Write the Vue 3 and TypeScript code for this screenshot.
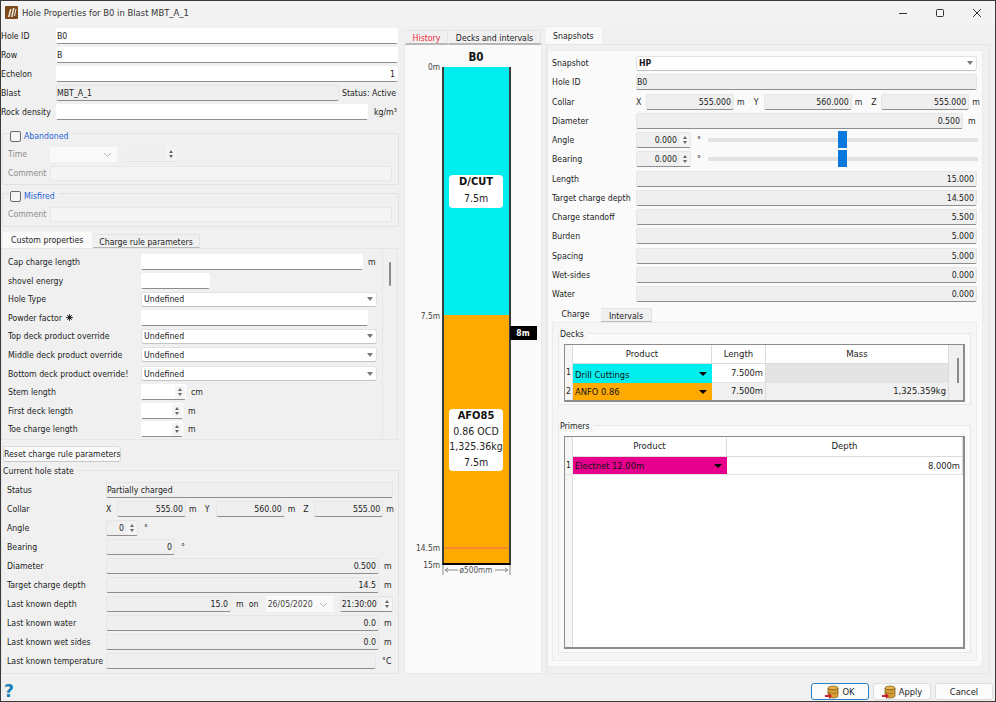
<template>
  <div class="window">
    <header class="titlebar">
      <svg class="app-icon" width="13" height="13" viewBox="0 0 13 13">
        <rect width="13" height="13" rx="1" fill="#7a4a1c" />
        <path d="M3 11 L5 3 L6.5 3 L4.5 11 Z M6 11 L8 2 L9.5 2 L7.5 11 Z M9 10 L10.5 3 L11.5 3 L10 10 Z" fill="#f4efe6" />
      </svg>
      <span class="title">Hole Properties for B0 in Blast MBT_A_1</span>
      <div class="win-btns">
        <svg width="10" height="10" viewBox="0 0 10 10"><path d="M1 5.5H9" stroke="#333" fill="none" /></svg>
        <svg width="10" height="10" viewBox="0 0 10 10"><rect x="1.5" y="1.5" width="7" height="7" rx="1" stroke="#333" fill="none" /></svg>
        <svg width="10" height="10" viewBox="0 0 10 10"><path d="M1 1L9 9M9 1L1 9" stroke="#333" fill="none" /></svg>
      </div>
    </header>

    <main class="content">
      <section class="left">
        <div class="top-rows">
          <div class="row"><label class="lbl-top">Hole ID</label><div class="field white grow">B0</div></div>
          <div class="row"><label class="lbl-top">Row</label><div class="field white grow">B</div></div>
          <div class="row"><label class="lbl-top">Echelon</label><div class="field white grow right">1</div></div>
          <div class="row">
            <label class="lbl-top">Blast</label><div class="field grow">MBT_A_1</div>
            <span class="status">Status: Active</span>
          </div>
          <div class="row">
            <label class="lbl-top">Rock density</label><div class="field white grow"></div>
            <span class="unit-density">kg/m³</span>
          </div>
        </div>

        <div class="group abandoned">
          <div class="group-title"><span class="check"></span><span class="blue">Abandoned</span></div>
          <div class="row disabled time-row">
            <label class="lbl-dis">Time</label>
            <div class="date-off"><svg width="9" height="5" viewBox="0 0 9 5"><path d="M1 1L4.5 4.5L8 1" stroke="#b5b5b5" fill="none" /></svg></div>
            <div class="time-off"><span class="spin-btns"><i class="up"></i><i class="down"></i></span></div>
          </div>
          <div class="row disabled comment"><label class="lbl-dis">Comment</label><div class="comment-box"></div></div>
        </div>

        <div class="group misfired">
          <div class="group-title"><span class="check"></span><span class="blue">Misfired</span></div>
          <div class="row disabled comment"><label class="lbl-dis">Comment</label><div class="comment-box"></div></div>
        </div>

        <div class="tabs custom-tabs">
          <span class="tab active">Custom properties</span>
          <span class="tab">Charge rule parameters</span>
        </div>
        <div class="custom-pane">
          <div class="custom-rows">
            <div v-for="r in customRows" :key="r.label" class="row">
              <label class="lbl-custom">{{ r.label }}
                <svg v-if="r.star" class="star" width="7" height="7" viewBox="0 0 7 7">
                  <path d="M3.5 0V7M0 3.5H7M1 1L6 6M6 1L1 6" stroke="#222" stroke-width=".8" />
                  <circle cx="3.5" cy="3.5" r="2" fill="#222" />
                </svg>
              </label>
              <div v-if="r.kind === 'combo'" class="combo">Undefined<i class="arrow"></i></div>
              <div v-else-if="r.kind === 'spin'" class="field white spin" :style="{ width: r.width + 'px' }">
                <span class="spin-btns"><i class="up"></i><i class="down"></i></span>
              </div>
              <div v-else class="field white" :style="{ width: r.width + 'px' }"></div>
              <span v-if="r.unit" class="unit">{{ r.unit }}</span>
            </div>
          </div>
          <div class="vscroll"><span class="vthumb"></span></div>
        </div>

        <button class="reset" type="button">Reset charge rule parameters</button>

        <div class="group state">
          <div class="group-title plain">Current hole state</div>
          <div class="state-rows">
            <div class="row"><label class="lbl-state">Status</label><div class="field grow">Partially charged</div></div>
            <div class="row collar">
              <label class="lbl-state">Collar</label>
              <span class="axis">X</span><div class="field right xyz">555.00</div><span class="unit">m</span>
              <span class="axis gap">Y</span><div class="field right xyz">560.00</div><span class="unit">m</span>
              <span class="axis gap">Z</span><div class="field right xyz">555.00</div><span class="unit">m</span>
            </div>
            <div class="row">
              <label class="lbl-state">Angle</label>
              <div class="field right spin angle-spin"><span>0</span><span class="spin-btns"><i class="up"></i><i class="down"></i></span></div>
              <span class="unit deg">°</span>
            </div>
            <div class="row">
              <label class="lbl-state">Bearing</label><div class="field right bearing">0</div><span class="unit deg">°</span>
            </div>
            <div class="row"><label class="lbl-state">Diameter</label><div class="field right grow">0.500</div><span class="unit m-end">m</span></div>
            <div class="row"><label class="lbl-state">Target charge depth</label><div class="field right grow">14.5</div><span class="unit m-end">m</span></div>
            <div class="row">
              <label class="lbl-state">Last known depth</label>
              <div class="field right depth-field">15.0</div>
              <span class="unit">m</span><span class="on">on</span>
              <div class="date-on">26/05/2020<svg width="9" height="5" viewBox="0 0 9 5"><path d="M1 1L4.5 4.5L8 1" stroke="#b5b5b5" fill="none" /></svg></div>
              <div class="field spin time-on"><span>21:30:00</span><span class="spin-btns"><i class="up"></i><i class="down"></i></span></div>
            </div>
            <div class="row"><label class="lbl-state">Last known water</label><div class="field right grow">0.0</div><span class="unit m-end">m</span></div>
            <div class="row"><label class="lbl-state">Last known wet sides</label><div class="field right grow">0.0</div><span class="unit m-end">m</span></div>
            <div class="row"><label class="lbl-state">Last known temperature</label><div class="field grow"></div><span class="unit c-end">°C</span></div>
          </div>
        </div>
      </section>

      <section class="mid">
        <div class="tabs mid-tabs">
          <span class="tab red">History</span>
          <span class="tab">Decks and intervals</span>
        </div>
        <div class="mid-pane">
          <svg class="hole" width="136" height="530" viewBox="405 45 136 530">
            <text x="476" y="61" class="hole-name" text-anchor="middle">B0</text>
            <rect x="443" y="67" width="67" height="248" fill="#00eeee" />
            <rect x="443" y="315" width="67" height="249" fill="#ffaa00" />
            <path d="M443 67V565M510 67V565" stroke="#3c3c3c" stroke-width="2" fill="none" />
            <path d="M444 548H509" stroke="#f58a2c" stroke-width="2" />
            <path d="M443 564H510" stroke="#000" stroke-width="2" />
            <text x="440" y="70" class="depth" text-anchor="end">0m</text>
            <text x="440" y="319" class="depth" text-anchor="end">7.5m</text>
            <text x="440" y="551" class="depth" text-anchor="end">14.5m</text>
            <text x="440" y="568" class="depth" text-anchor="end">15m</text>

            <rect x="510" y="326" width="27" height="14" fill="#000" />
            <text x="523" y="336" class="tag" text-anchor="middle">8m</text>

            <rect x="449" y="175" width="54" height="33" rx="4" fill="#fff" />
            <text x="476" y="185" class="deck-name" text-anchor="middle">D/CUT</text>
            <text x="476" y="202" class="deck-text" text-anchor="middle">7.5m</text>

            <rect x="449" y="409" width="54" height="62" rx="4" fill="#fff" />
            <text x="476" y="419" class="deck-name" text-anchor="middle">AFO85</text>
            <text x="476" y="435" class="deck-text" text-anchor="middle">0.86 OCD</text>
            <text x="476" y="450" class="deck-text" text-anchor="middle">1,325.36kg</text>
            <text x="476" y="466" class="deck-text" text-anchor="middle">7.5m</text>

            <path d="M443 565V575M510 565V575M445 570H458M495 570H508M445 570l3 -2M445 570l3 2M508 570l-3 -2M508 570l-3 2" stroke="#8a8a8a" fill="none" />
            <text x="476" y="573" class="dim" text-anchor="middle">ø500mm</text>
          </svg>
        </div>
      </section>

      <section class="snap">
        <div class="tabs snap-tabs"><span class="tab active">Snapshots</span></div>
        <div class="snap-pane">
          <div class="snap-inner">
            <div class="snap-rows">
              <div class="row">
                <label class="lbl-snap">Snapshot</label>
                <div class="combo strong">HP<i class="arrow"></i></div>
              </div>
              <div class="row"><label class="lbl-snap">Hole ID</label><div class="field grow">B0</div></div>
              <div class="row snap-collar">
                <label class="lbl-snap">Collar</label>
                <span class="axis">X</span><div class="field right snap-xyz">555.000</div><span class="unit">m</span>
                <span class="axis gap">Y</span><div class="field right snap-xyz">560.000</div><span class="unit">m</span>
                <span class="axis gap">Z</span><div class="field right snap-xyz">555.000</div><span class="unit">m</span>
              </div>
              <div class="row"><label class="lbl-snap">Diameter</label><div class="field right grow">0.500</div><span class="unit m-end">m</span></div>
              <div v-for="a in ['Angle', 'Bearing']" :key="a" class="row">
                <label class="lbl-snap">{{ a }}</label>
                <div class="field right spin snap-spin"><span>0.000</span><span class="spin-btns"><i class="up"></i><i class="down"></i></span></div>
                <span class="unit deg">°</span>
                <div class="slider"><span class="slider-track"></span><span class="slider-thumb"></span></div>
              </div>
              <div v-for="s in snapValues" :key="s.label" class="row">
                <label class="lbl-snap">{{ s.label }}</label><div class="field right grow">{{ s.value }}</div>
              </div>
            </div>

            <div class="tabs charge-tabs">
              <span class="tab active">Charge</span>
              <span class="tab">Intervals</span>
            </div>
            <div class="charge-pane">
              <div class="group-light decks">
                <div class="group-title light">Decks</div>
                <div class="grid-table">
                  <div class="tr head deck-cols">
                    <span class="no"></span><span class="th">Product</span><span class="th">Length</span><span class="th">Mass</span><span class="table-scroll"></span>
                  </div>
                  <div class="tr deck-cols">
                    <span class="no">1</span>
                    <span class="prod cyan">Drill Cuttings<i class="drop"></i></span>
                    <span class="td">7.500m</span><span class="td shade"></span>
                    <span class="table-scroll"><span class="table-thumb"></span></span>
                  </div>
                  <div class="tr short deck-cols">
                    <span class="no">2</span>
                    <span class="prod orange">ANFO 0.86<i class="drop"></i></span>
                    <span class="td alt">7.500m</span><span class="td alt">1,325.359kg</span>
                    <span class="table-scroll"></span>
                  </div>
                </div>
              </div>
              <div class="group-light primers">
                <div class="group-title light">Primers</div>
                <div class="grid-table fill">
                  <div class="tr head primer-cols">
                    <span class="no"></span><span class="th">Product</span><span class="th">Depth</span>
                  </div>
                  <div class="tr primer-row primer-cols">
                    <span class="no">1</span>
                    <span class="prod magenta">Electnet 12.00m<i class="drop"></i></span>
                    <span class="td">8.000m</span>
                  </div>
                  <div class="tr-empty"><span class="no"></span></div>
                </div>
              </div>
            </div>
          </div>
        </div>
      </section>
    </main>

    <footer class="footer">
      <span class="help">?</span>
      <button class="btn default" type="button"><svg class="db" viewBox="0 0 14 14" width="14" height="14"><use href="#db-icon" /></svg>OK</button>
      <button class="btn" type="button"><svg class="db" viewBox="0 0 14 14" width="14" height="14"><use href="#db-icon" /></svg>Apply</button>
      <button class="btn" type="button">Cancel</button>
      <svg width="0" height="0" class="defs">
        <defs>
          <g id="db-icon">
            <ellipse cx="8" cy="3" rx="5" ry="2" fill="#e6b34a" stroke="#7a5a1a" stroke-width=".7" />
            <path d="M3 3V11C3 12.2 5.2 13 8 13S13 12.2 13 11V3C13 4.2 10.8 5 8 5S3 4.2 3 3Z" fill="#d9a038" stroke="#7a5a1a" stroke-width=".7" />
            <path d="M3 6.5C3 7.7 5.2 8.5 8 8.5S13 7.7 13 6.5" stroke="#7a5a1a" stroke-width=".6" fill="none" />
            <path d="M0 10H4V8L7 11L4 14V12H0Z" fill="#c8202c" />
          </g>
        </defs>
      </svg>
    </footer>
  </div>
</template>

<script setup lang="ts">
interface CustomRow {
  label: string
  kind: 'text' | 'combo' | 'spin'
  width?: number
  unit?: string
  star?: boolean
}

// rows of the custom properties tab
const customRows: CustomRow[] = [
  { label: 'Cap charge length', kind: 'text', width: 222, unit: 'm' },
  { label: 'shovel energy', kind: 'text', width: 69 },
  { label: 'Hole Type', kind: 'combo' },
  { label: 'Powder factor', kind: 'text', width: 227, star: true },
  { label: 'Top deck product override', kind: 'combo' },
  { label: 'Middle deck product override', kind: 'combo' },
  { label: 'Bottom deck product override!', kind: 'combo' },
  { label: 'Stem length', kind: 'spin', width: 45, unit: 'cm' },
  { label: 'First deck length', kind: 'spin', width: 42, unit: 'm' },
  { label: 'Toe charge length', kind: 'spin', width: 42, unit: 'm' }
]

const snapValues = [
  { label: 'Length', value: '15.000' },
  { label: 'Target charge depth', value: '14.500' },
  { label: 'Charge standoff', value: '5.500' },
  { label: 'Burden', value: '5.000' },
  { label: 'Spacing', value: '5.000' },
  { label: 'Wet-sides', value: '0.000' },
  { label: 'Water', value: '0.000' }
]
</script>

<style>
html, body { margin: 0; padding: 0; background: #f0f0f0; overflow: hidden; }
</style>

<style scoped>
.window {
  width: 996px;
  height: 702px;
  display: flex;
  flex-direction: column;
  background: #f0f0f0;
  outline: 1px solid #3a3a3a;
  outline-offset: -1px;
  font-family: "DejaVu Sans Condensed", "DejaVu Sans", sans-serif;
  font-stretch: condensed;
  font-size: 8.7px;
  color: #1c1c1c;
}
.titlebar {
  height: 25px;
  flex: none;
  display: flex;
  align-items: center;
  background: #f3f3f3;
  padding-left: 5px;
}
.title { margin-left: 4px; font-size: 9.4px; color: #333; }
.win-btns { margin-left: auto; display: flex; gap: 27px; padding-right: 14px; }

.content { flex: 1; display: flex; min-height: 0; }
.left { width: 400px; flex: none; padding-top: 3px; box-sizing: border-box; }
.row { display: flex; align-items: center; height: 16px; }
.top-rows { display: flex; flex-direction: column; gap: 3px; padding: 0 2px 0 1px; }
.lbl-top { width: 55px; flex: none; }
.field {
  height: 16px;
  line-height: 15px;
  box-sizing: border-box;
  flex: none;
  padding: 0 2px 0 0;
  background: #efefef;
  border: 1px solid #e6e6e6;
  border-bottom: 1px solid #8e8e8e;
  border-radius: 2px;
  white-space: nowrap;
}
.field.white { background: #fff; border-color: #fff; border-bottom-color: #8e8e8e; }
.grow { flex: 1; min-width: 0; }
.right { text-align: right; }
.status { width: 56px; flex: none; padding-left: 3px; white-space: nowrap; }
.unit-density { width: 30px; flex: none; padding-left: 6px; box-sizing: border-box; }
.blue { color: #2a62d8; margin-left: 3px; }

.group {
  border: 1px solid #e2e2e2;
  border-radius: 2px;
  margin: 0 0 0 2px;
  width: 397px;
  box-sizing: border-box;
}
.group-title {
  display: flex;
  align-items: center;
  width: fit-content;
  height: 12px;
  margin: -4px 0 0 6px;
  padding: 0 4px 0 1px;
  background: #f0f0f0;
}
.group-title.plain { margin: -6px 0 0 0; padding: 0 3px 0 1px; }
.check {
  width: 9px;
  height: 9px;
  border: 1px solid #6a6a6a;
  border-radius: 2px;
  background: #f5f5f5;
}
.abandoned { margin-top: 13px; height: 52px; }
.misfired { margin-top: 8px; height: 34px; }
.disabled { padding-left: 5px; color: #8e8e8e; }
.time-row { margin-top: 4px; }
.lbl-dis { width: 42px; flex: none; }
.date-off {
  width: 67px; height: 15px; background: #f9f9f9; display: flex; align-items: center;
  justify-content: flex-end; padding-right: 5px; box-sizing: border-box;
}
.time-off {
  width: 53px; height: 15px; margin-left: 6px; display: flex; justify-content: flex-end; align-items: center;
  background: #efefef; border-bottom: 1px solid #e6e6e6; box-sizing: border-box;
}
.comment { margin-top: 3px; }
.misfired .comment { margin-top: 4px; }
.comment-box { width: 342px; height: 15px; background: #f4f4f4; border: 1px solid #e8e8e8; box-sizing: border-box; border-radius: 1px; }

.spin { display: flex; align-items: center; justify-content: flex-end; gap: 3px; padding-right: 0; }
.spin-btns {
  width: 10px; height: 13px; display: flex; flex-direction: column; align-items: center; justify-content: center;
  gap: 2px; background: #f4f4f4; border-radius: 2px; flex: none;
}
.spin-btns i { width: 0; height: 0; border-left: 2.5px solid transparent; border-right: 2.5px solid transparent; }
.spin-btns .up { border-bottom: 3px solid #666; }
.spin-btns .down { border-top: 3px solid #666; }

.tabs { display: flex; align-items: flex-end; }
.tab {
  height: 14px;
  line-height: 14px;
  padding: 0 8px;
  background: #f0f0f0;
  border: 1px solid #e4e4e4;
  border-bottom: 1px solid #b8b8b8;
  border-left: 0;
  white-space: nowrap;
}
.tab.active { height: 16px; line-height: 15px; background: #fafafa; border-color: #fafafa; }
.custom-tabs { margin: 5px 0 0 3px; height: 16px; }
.custom-tabs .tab:first-child { width: 89px; box-sizing: border-box; padding: 0 0 0 8px; }
.custom-tabs .tab:last-child { width: 107px; box-sizing: border-box; text-align: center; padding: 0; margin-left: 1px; }
.custom-pane {
  width: 397px;
  height: 192px;
  margin-left: 1px;
  box-sizing: border-box;
  display: flex;
  background: #f0f0f0;
  border: 1px solid #e6e6e6;
}
.custom-rows { flex: 1; display: flex; flex-direction: column; gap: 2.6px; padding: 5px 0 0 6px; }
.lbl-custom { width: 133px; flex: none; white-space: nowrap; display: flex; align-items: center; }
.star { margin-left: 4px; }
.combo {
  flex: none;
  width: 236px;
  height: 15px;
  line-height: 14px;
  box-sizing: border-box;
  padding: 0 0 0 2px;
  background: #fff;
  border: 1px solid #e2e2e2;
  border-bottom-color: #c4c4c4;
  border-radius: 3px;
  display: flex;
  align-items: center;
  justify-content: space-between;
}
.arrow {
  width: 0; height: 0; margin-right: 3px;
  border-left: 3.5px solid transparent; border-right: 3.5px solid transparent; border-top: 4px solid #777;
}
.unit { flex: none; padding-left: 5px; }
.vscroll { width: 15px; border-left: 1px solid #e6e6e6; display: flex; justify-content: center; padding-top: 13px; box-sizing: border-box; }
.vthumb { width: 2px; height: 24px; background: #8a8a8a; border-radius: 1px; }

.reset {
  display: block;
  width: 118px;
  height: 16px;
  margin: 6px 0 0 3px;
  padding: 0;
  white-space: nowrap;
  background: #fafafa;
  border: 1px solid #dcdcdc;
  border-bottom-color: #c8c8c8;
  border-radius: 3px;
  font: inherit;
  font-stretch: condensed;
  color: #1c1c1c;
}
.state { margin-top: 8px; width: 398px; height: 204px; margin-left: 1px; }
.state-rows { display: flex; flex-direction: column; gap: 3px; padding: 5px 0 0 5px; }
.lbl-state { width: 99px; flex: none; white-space: nowrap; }
.state-rows .row { padding-right: 5px; }
.axis { flex: none; width: 11px; }
.axis.gap { margin-left: 8px; }
.collar .unit { padding-left: 3px; }
.xyz { width: 69px; }
.angle-spin { width: 32px; }
.deg { padding-left: 6px; }
.bearing { width: 69px; }
.m-end { width: 14px; box-sizing: border-box; padding-left: 5px; }
.c-end { width: 17px; box-sizing: border-box; padding-left: 6px; }
.depth-field { width: 125px; }
.on { width: 22px; flex: none; padding-left: 5px; box-sizing: border-box; }
.date-on {
  width: 67px; height: 16px; flex: none; box-sizing: border-box; background: #f9f9f9; padding: 0 5px 0 2px;
  display: flex; align-items: center; justify-content: space-between; color: #444;
}
.time-on { width: 53px; margin-left: 7px; padding-left: 1px; justify-content: space-between; }

.mid { width: 138px; margin-left: 4px; flex: none; padding-top: 4px; box-sizing: border-box; display: flex; flex-direction: column; }
.mid-tabs { height: 15px; }
.mid-tabs .tab:first-child { margin-left: 2px; width: 42px; padding: 0; text-align: center; box-sizing: border-box; }
.mid-tabs .tab:last-child { width: 92px; padding: 0; text-align: center; box-sizing: border-box; margin-left: 1px; }
.red { color: #ea2b3b; }
.mid-pane { height: 630px; background: #fafafa; border: 1px solid #e8e8e8; border-top: 1px solid #b8b8b8; box-sizing: border-box; }
.hole { display: block; }
.hole-name { font: bold 11.5px "DejaVu Sans Condensed", "DejaVu Sans", sans-serif; fill: #111; }
.depth { font-size: 8.3px; fill: #444; }
.tag { font: bold 8.5px "DejaVu Sans Condensed", "DejaVu Sans", sans-serif; fill: #fff; }
.deck-name { font: bold 11px "DejaVu Sans Condensed", "DejaVu Sans", sans-serif; fill: #111; }
.deck-text { font-size: 10.5px; fill: #222; }
.dim { font-size: 8.2px; fill: #555; }

.snap { width: 444px; margin-left: 4px; flex: none; padding-top: 2px; box-sizing: border-box; display: flex; flex-direction: column; }
.snap-tabs { height: 17px; }
.snap-tabs .tab.active { height: 17px; width: 56px; padding: 0 0 0 7px; box-sizing: border-box; line-height: 16px; }
.snap-pane { height: 630px; background: #f0f0f0; border: 1px solid #e6e6e6; box-sizing: border-box; padding: 5px 6px 6px 0; }
.snap-inner { height: 100%; box-sizing: border-box; background: #fafafa; border: 1px solid #ececec; padding: 4px 5px 0 4px; }
.snap-rows { display: flex; flex-direction: column; gap: 3.25px; }
.lbl-snap { width: 84px; flex: none; white-space: nowrap; }
.snap-rows .combo { flex: 1; }
.strong { font-weight: 700; }
.snap-collar .axis { width: 10px; }
.snap-collar .unit { padding-left: 3px; }
.snap-collar .axis.gap { margin-left: 9px; }
.snap-xyz { width: 88px; }
.snap-spin { width: 55px; }
.slider { flex: 1; height: 16px; margin: 0 -1px 0 7px; display: flex; align-items: center; position: relative; }
.slider-track { flex: 1; height: 4px; background: #e2e2e2; border-radius: 1px; }
/* handle sits over the track */
.slider-thumb { position: absolute; left: 130px; top: -1px; width: 9px; height: 17px; background: #0a78dc; }

.charge-tabs { margin-top: 4px; height: 16px; }
.charge-tabs .tab { width: 51px; box-sizing: border-box; padding: 0; text-align: center; margin-left: 1px; }
.charge-tabs .tab.active { width: 48px; background: #fafafa; margin-left: 0; }
.charge-pane { height: 339px; width: 425px; border: 1px solid #ececec; box-sizing: border-box; padding: 10px 5px 0 5px; background: #f6f6f6; }
.group-light { border: 1px solid #e8e8e8; background: #fafafa; box-sizing: border-box; padding: 0 5px; }
.group-title.light { background: #f6f6f6; margin: -6px 0 4px -5px; height: 12px; padding: 0 4px 0 1px; }
.decks { height: 72px; }
.primers { height: 228px; margin-top: 20px; }
.grid-table { border: 2px solid #8c8c8c; border-width: 1px 2px 2px 1px; background: #fff; box-sizing: border-box; }
.fill { height: 213px; display: flex; flex-direction: column; }
.tr { display: grid; height: 19px; box-sizing: border-box; border-bottom: 1px solid #e4e4e4; }
.tr.head { height: 19px; background: #fff; border-bottom: 0; }
.primers .tr.head { height: 20px; }
.tr.short { height: 17px; border-bottom: 0; }
.primer-row { height: 18px; }
.deck-cols { grid-template-columns: 8px 139px 54px 183px 14px; }
.primer-cols { grid-template-columns: 8px 154px 1fr; }
.no { display: block; text-align: center; background: #f5f5f5; border-right: 1px solid #dcdcdc; line-height: 17px; }
.th { text-align: center; line-height: 18px; border-right: 1px solid #dcdcdc; font-size: 9.5px; border-bottom: 1px solid #dcdcdc; }
.prod { display: flex; align-items: center; justify-content: space-between; padding: 0 2px; color: #111; font-size: 9.3px; }
.cyan { background: #00eeee; }
.orange { background: #ffaa00; }
.magenta { background: #e6008c; }
.drop { width: 0; height: 0; margin-right: 3px; border-left: 4px solid transparent; border-right: 4px solid transparent; border-top: 4px solid #000; }
.td { text-align: right; padding-right: 2px; line-height: 17px; font-size: 9.3px; border-right: 1px solid #dcdcdc; }
.short .td { line-height: 16px; }
.short .no { line-height: 16px; }
.shade { background: #e4e4e4; }
.alt { background: #f0f0f0; }
.table-scroll { background: #f0f0f0; display: flex; justify-content: center; padding-left: 3px; box-sizing: border-box; }
.table-thumb { width: 2px; height: 26px; background: #8a8a8a; margin-top: -6px; }
.tr-empty { flex: 1; display: grid; grid-template-columns: 8px 1fr; }

.footer { height: 27px; flex: none; box-sizing: border-box; display: flex; align-items: flex-end; justify-content: flex-end; gap: 4px; padding: 0 3px 2px 0; position: relative; }
.help { margin-right: auto; margin-left: 4px; font: bold 17px "DejaVu Sans", sans-serif; line-height: 18px; color: #1a7fb5; }
.btn {
  width: 58px;
  height: 17px;
  padding: 0;
  background: #fbfbfb;
  border: 1px solid #dcdcdc;
  border-radius: 3px;
  font: inherit;
  font-stretch: condensed;
  font-size: 9.3px;
  color: #1c1c1c;
  display: flex;
  align-items: center;
  justify-content: center;
  gap: 3px;
}
.default { border: 1.5px solid #2b80c4; }
.defs { position: absolute; }
</style>
